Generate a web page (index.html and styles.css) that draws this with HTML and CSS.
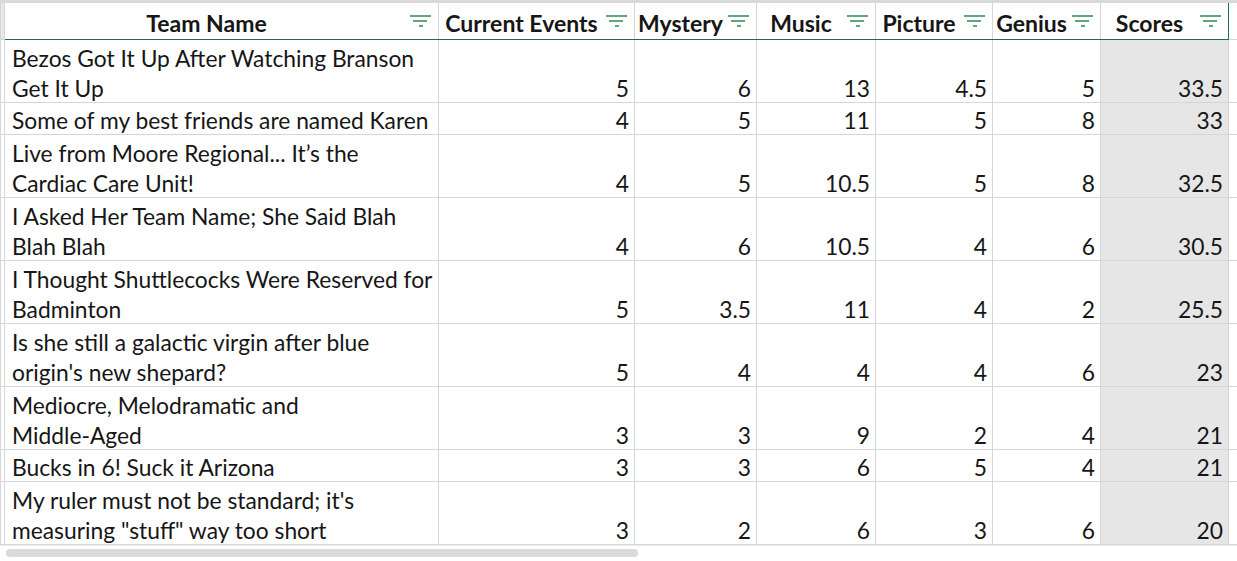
FILE: index.html
```html
<!DOCTYPE html>
<html lang="en">
<head>
<meta charset="utf-8">
<title>Trivia Scores</title>
<link rel="stylesheet" href="styles.css">
</head>
<body>
<div class="sheet">
  <table class="grid">
    <colgroup>
      <col class="c-stub"><col class="c-team"><col class="c-ce"><col class="c-my"><col class="c-mu"><col class="c-pi"><col class="c-ge"><col class="c-sc"><col class="c-extra">
    </colgroup>
    <thead>
      <tr class="head">
        <th class="stub"></th>
        <th><div class="hcell"><span class="hlabel">Team Name</span><svg class="filter" viewBox="0 0 22 12"><path d="M0 1H21M3 6H17M9 11H13"/></svg></div></th>
        <th><div class="hcell"><span class="hlabel">Current Events</span><svg class="filter" viewBox="0 0 22 12"><path d="M0 1H21M3 6H17M9 11H13"/></svg></div></th>
        <th><div class="hcell"><span class="hlabel">Mystery</span><svg class="filter" viewBox="0 0 22 12"><path d="M0 1H21M3 6H17M9 11H13"/></svg></div></th>
        <th><div class="hcell"><span class="hlabel">Music</span><svg class="filter" viewBox="0 0 22 12"><path d="M0 1H21M3 6H17M9 11H13"/></svg></div></th>
        <th><div class="hcell"><span class="hlabel">Picture</span><svg class="filter" viewBox="0 0 22 12"><path d="M0 1H21M3 6H17M9 11H13"/></svg></div></th>
        <th><div class="hcell"><span class="hlabel">Genius</span><svg class="filter" viewBox="0 0 22 12"><path d="M0 1H21M3 6H17M9 11H13"/></svg></div></th>
        <th class="last"><div class="hcell"><span class="hlabel">Scores</span><svg class="filter" viewBox="0 0 22 12"><path d="M0 1H21M3 6H17M9 11H13"/></svg></div></th>
        <th class="extra"></th>
      </tr>
    </thead>
    <tbody>
      <tr class="r2"><td class="stub"></td><td class="name">Bezos Got It Up After Watching Branson<br>Get It Up</td><td class="num">5</td><td class="num">6</td><td class="num">13</td><td class="num">4.5</td><td class="num">5</td><td class="num score">33.5</td><td class="extra"></td></tr>
      <tr class="r1"><td class="stub"></td><td class="name">Some of my best friends are named Karen</td><td class="num">4</td><td class="num">5</td><td class="num">11</td><td class="num">5</td><td class="num">8</td><td class="num score">33</td><td class="extra"></td></tr>
      <tr class="r2"><td class="stub"></td><td class="name">Live from Moore Regional... It’s the<br>Cardiac Care Unit!</td><td class="num">4</td><td class="num">5</td><td class="num">10.5</td><td class="num">5</td><td class="num">8</td><td class="num score">32.5</td><td class="extra"></td></tr>
      <tr class="r2"><td class="stub"></td><td class="name">I Asked Her Team Name; She Said Blah<br>Blah Blah</td><td class="num">4</td><td class="num">6</td><td class="num">10.5</td><td class="num">4</td><td class="num">6</td><td class="num score">30.5</td><td class="extra"></td></tr>
      <tr class="r2"><td class="stub"></td><td class="name">I Thought Shuttlecocks Were Reserved for<br>Badminton</td><td class="num">5</td><td class="num">3.5</td><td class="num">11</td><td class="num">4</td><td class="num">2</td><td class="num score">25.5</td><td class="extra"></td></tr>
      <tr class="r2"><td class="stub"></td><td class="name">Is she still a galactic virgin after blue<br>origin's new shepard?</td><td class="num">5</td><td class="num">4</td><td class="num">4</td><td class="num">4</td><td class="num">6</td><td class="num score">23</td><td class="extra"></td></tr>
      <tr class="r2"><td class="stub"></td><td class="name">Mediocre, Melodramatic and<br>Middle-Aged</td><td class="num">3</td><td class="num">3</td><td class="num">9</td><td class="num">2</td><td class="num">4</td><td class="num score">21</td><td class="extra"></td></tr>
      <tr class="r1"><td class="stub"></td><td class="name">Bucks in 6! Suck it Arizona</td><td class="num">3</td><td class="num">3</td><td class="num">6</td><td class="num">5</td><td class="num">4</td><td class="num score">21</td><td class="extra"></td></tr>
      <tr class="r2"><td class="stub"></td><td class="name">My ruler must not be standard; it's<br>measuring "stuff" way too short</td><td class="num">3</td><td class="num">2</td><td class="num">6</td><td class="num">3</td><td class="num">6</td><td class="num score">20</td><td class="extra"></td></tr>
    </tbody>
  </table>
  <div class="hscroll"><div class="thumb"></div></div>
</div>
</body>
</html>
```

FILE: styles.css
```css
html, body {
  margin: 0;
  padding: 0;
  background: #ffffff;
}

body {
  font-family: Lato, "Open Sans", sans-serif;
  font-size: 22.8px;
  color: #161616;
}

.sheet {
  width: 1237px;
  height: 561px;
  overflow: hidden;
  display: flex;
  flex-direction: column;
}

.grid {
  border-collapse: collapse;
  table-layout: fixed;
  width: 1237px;
  border-top: 3px solid #d9d9d9;
}

.c-stub { width: 4px; }
.c-team { width: 434px; }
.c-ce { width: 196px; }
.c-my { width: 122px; }
.c-mu { width: 119px; }
.c-pi { width: 117px; }
.c-ge { width: 108px; }
.c-sc { width: 128px; }
.c-extra { width: 9px; }

.grid th {
  height: 32px;
  padding: 4px 0 0;
  border: 1px solid #d6d6d6;
  border-bottom: 1px solid #1f6e43;
  font-size: 23px;
  font-weight: 700;
  line-height: 28px;
  white-space: nowrap;
}

.grid th.stub {
  background: #e3ebe3;
  border-bottom-color: #d6d6d6;
}

.grid th.extra {
  border-bottom-color: #d6d6d6;
}

.grid th.last {
  border-right: 1px solid #1f6e43;
}

.hcell {
  display: flex;
  align-items: center;
}

.hlabel {
  flex: 1;
  text-align: center;
}

.filter {
  width: 22px;
  height: 12px;
  margin: -4px 6px 0 2px;
  flex: none;
  fill: none;
  stroke: #2f8a55;
  stroke-width: 1.5;
}

.grid td {
  padding: 0 5px 0 7px;
  border: 1px solid #d6d6d6;
  vertical-align: bottom;
  line-height: 30px;
  white-space: nowrap;
}

/* let the last text line sit a little lower, as in the sheet */
.grid td.name::after,
.grid td.num::after {
  content: "";
  display: block;
  margin-top: -1px;
}

.grid td.stub,
.grid td.extra {
  padding: 0;
}

.r1 { height: 32px; }
.r2 { height: 63px; }

.grid td.num {
  text-align: right;
}

.grid td.score {
  background: #e6e6e6;
}

.hscroll {
  flex: 1;
  padding: 3px 0 0 6px;
  border-top: 1px solid #ececec;
}

.thumb {
  width: 632px;
  height: 8px;
  border-radius: 4px;
  background: #dadada;
}
```
